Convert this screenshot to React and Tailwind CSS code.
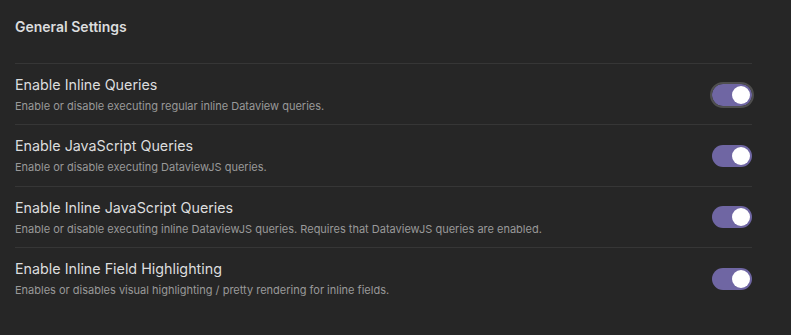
import React, { useState } from 'react';

const settings = [
    { name: 'Enable Inline Queries', desc: 'Enable or disable executing regular inline Dataview queries.', focused: true },
    { name: 'Enable JavaScript Queries', desc: 'Enable or disable executing DataviewJS queries.' },
    { name: 'Enable Inline JavaScript Queries', desc: 'Enable or disable executing inline DataviewJS queries. Requires that DataviewJS queries are enabled.' },
    { name: 'Enable Inline Field Highlighting', desc: 'Enables or disables visual highlighting / pretty rendering for inline fields.' },
];

const Toggle = ({ on, focused, onClick }) => (
    <button
        onClick={onClick}
        className={`relative w-[40px] h-[22px] rounded-full shrink-0 ${on ? 'bg-[#6f66a3]' : 'bg-[#3f3f3f]'} ${focused ? 'outline-2 outline-[#4f4f4f]' : ''}`}
    >
        <span className={`absolute top-[2px] w-[18px] h-[18px] rounded-full bg-white ${on ? 'left-[20px]' : 'left-[2px]'}`} />
    </button>
);

const App = () => {
    const [values, setValues] = useState(settings.map(() => true));

    return (
        <div className="w-[791px] h-[335px] bg-[#262626] pl-[15px] pr-[39px] pt-[17px] font-['Inter',sans-serif] overflow-hidden">
            <h2 className="text-[14px] font-semibold text-[#dcddde] leading-[20px] h-[46px]">General Settings</h2>
            {settings.map((s, i) => (
                <div key={s.name} className="flex items-center justify-between border-t border-[#363636] h-[61.3px] pt-[1px]">
                    <div>
                        <p className="text-[14.3px] text-[#dcddde] leading-[20px]">{s.name}</p>
                        <p className="text-[11px] text-[#999999] leading-[16px] mt-[3px]">{s.desc}</p>
                    </div>
                    <Toggle
                        on={values[i]}
                        focused={s.focused}
                        onClick={() => setValues(prev => prev.map((v, j) => j === i ? !v : v))}
                    />
                </div>
            ))}
        </div>
    );
};

export default App;
